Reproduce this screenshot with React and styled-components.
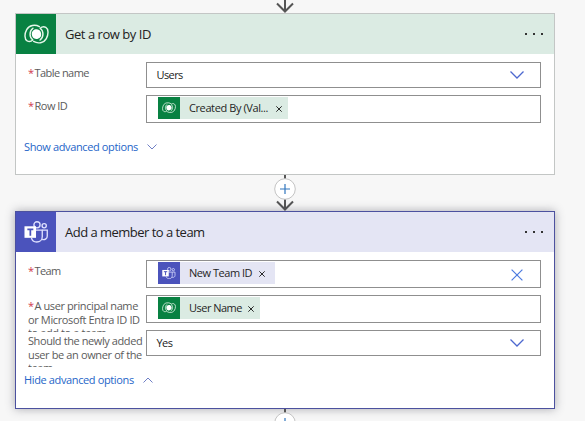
import React from "react";
import styled, { createGlobalStyle } from "styled-components";

const Global = createGlobalStyle`
  *, *::before, *::after { box-sizing: border-box; }
  body { margin: 0; background: #f7f7f7; overflow: hidden; }
`;

const Canvas = styled.main`
  width: 585px;
  height: 421px;
  overflow: hidden;
  display: flex;
  flex-direction: column;
  padding-left: 15px;
  font-family: "Segoe UI", "Open Sans", "Noto Sans", sans-serif;
  font-size: 11px;
  color: #1f1f1f;
`;

const Connector = styled.div`
  flex: none;
  width: 540px;
  height: ${(p) => p.$height}px;
  display: flex;
  justify-content: center;
  svg { display: block; overflow: visible; }
`;

const Card = styled.section`
  flex: none;
  width: 540px;
  height: ${(p) => p.$height}px;
  background: #fff;
  border: 1px solid ${(p) => p.$border};
  box-shadow: ${(p) => (p.$selected ? "0 0 9px rgba(60, 60, 75, 0.42)" : "none")};
`;

const Header = styled.header`
  height: 40px;
  display: flex;
  align-items: center;
  background: ${(p) => p.$tint};
`;

const IconTile = styled.span`
  flex: none;
  width: ${(p) => p.$size}px;
  height: ${(p) => p.$size}px;
  display: flex;
  align-items: center;
  justify-content: center;
  background: ${(p) => p.$color};
`;

const Title = styled.h2`
  flex: 1;
  margin: 0 0 0 9px;
  font-size: 13px;
  line-height: 18px;
  font-weight: 400;
  color: #222;
  letter-spacing: ${(p) => p.$track}px;
`;

const MenuButton = styled.button`
  width: 18px;
  height: 12px;
  margin-right: 11px;
  padding: 0;
  border: 0;
  background: none;
  display: flex;
  align-items: center;
  justify-content: space-between;
`;

const Dot = styled.i`
  width: 2px;
  height: 2px;
  background: #333;
`;

const Fields = styled.div`
  padding: 8px 13px 0 12px;
  display: grid;
  row-gap: 7px;
`;

const Row = styled.div`
  display: grid;
  grid-template-columns: 118px 395px;
  grid-template-rows: 100%;
  height: ${(p) => p.$height}px;
`;

const Label = styled.label`
  height: 33px;
  margin-top: 4px;
  overflow: hidden;
  line-height: 14px;
  color: #5b5b5b;
  white-space: nowrap;
`;

const Line = styled.span`
  display: block;
  letter-spacing: ${(p) => p.$track}px;
  &:nth-child(3) { margin-top: -1px; }
`;

const Required = styled.span`
  display: inline-block;
  width: 6.500px;
  color: #d0384c;
  letter-spacing: 0;
`;

const Field = styled.div`
  display: flex;
  align-items: center;
  padding: 0 16px 0 ${(p) => (p.$tokens ? 11 : 9.5)}px;
  border: 1px solid #8f8f8f;
  background: #fff;
  svg { flex: none; }
`;

const Value = styled.span`
  flex: 1;
  color: #222;
  margin-top: -1px;
  letter-spacing: ${(p) => p.$track}px;
`;

const Token = styled.span`
  width: ${(p) => p.$width}px;
  height: 22px;
  margin: 0 auto 2px 0;
  display: flex;
  align-items: center;
  background: ${(p) => p.$tint};
  white-space: nowrap;
`;

const TokenText = styled.span`
  flex: 1;
  margin: -1px 0 0 9px;
  letter-spacing: ${(p) => p.$track}px;
`;

const TokenClose = styled.button`
  width: 6px;
  height: 6px;
  margin: 1px ${(p) => p.$right}px 0 0;
  padding: 0;
  border: 0;
  background: none;
  display: flex;
`;

const AdvancedLink = styled.button`
  margin: 16px 0 0 8px;
  padding: 0;
  border: 0;
  background: none;
  display: flex;
  align-items: center;
  gap: 9px;
  font: inherit;
  line-height: 16px;
  color: #2565c8;
  letter-spacing: ${(p) => p.$track}px;
`;

const GREEN = "#088142";
const GREEN_TINT = "#dbebe3";
const PURPLE = "#4b53bc";
const PURPLE_TINT = "#e4e5f4";

const LOBE = "M16 2.300C11.500-.3 5.500.6 2.800 5.300.4 9.600.3 15.300 3.300 17c1.900 1 4.300.5 5.900-.9C5.300 13.200 5.300 7 9.300 3.900";

function DataverseIcon({ width }) {
  return (
    <svg width={width} height={(width * 21) / 26} viewBox="0 -.5 26 21" fill="none" stroke="#e5f6e9" strokeWidth="1.5" strokeLinecap="round" strokeLinejoin="round">
      <path d={LOBE} />
      <path d={LOBE} transform="rotate(180 13 10)" />
      <path d="M9.400 6.400c2.500-2.600 6.900-1.700 8 1.300 1 2.500.5 4.800-.8 5.900-2.500 2.600-6.900 1.700-8-1.300-1-2.500-.5-4.800.8-5.900z" fill="#fff" stroke="none" />
    </svg>
  );
}

function TeamsIcon({ width }) {
  return (
    <svg width={width} height={(width * 23) / 26} viewBox="0 0 26 23" fill="none" stroke="#dfe1ff" strokeWidth="1.400">
      <circle cx="13.500" cy="4" r="3.200" />
      <circle cx="21" cy="5" r="2.200" />
      <path d="M12 9.500h7v6.500c0 3.500-2.500 5.800-5.700 5.800-2.800 0-5-1.500-5.600-4.300" />
      <path d="M19 9.500h5.200v6c0 2.700-2.200 4.400-5.400 3.700" />
      <rect x="0.500" y="5.500" width="12" height="12" fill="#fff" stroke="none" />
      <path d="M3.500 8.700h6.200M6.600 8.700v6.600" stroke={PURPLE} strokeWidth="1.800" />
    </svg>
  );
}

const Chevron = ({ width, height, color, up, stroke = 1.3 }) => (
  <svg width={width} height={height} viewBox={`0 0 ${width} ${height}`} fill="none" stroke={color} strokeWidth={stroke}>
    <path d={up ? `M.5 ${height - 0.5}L${width / 2} 1 ${width - 0.5} ${height - 0.5}` : `M.5 .5L${width / 2} ${height - 1} ${width - 0.5} .5`} />
  </svg>
);

const FieldChevron = () => <Chevron width={14} height={8} color="#4d68cf" />;

const Cross = ({ size, color, stroke }) => (
  <svg width={size} height={size} viewBox="0 0 10 10" stroke={color} strokeWidth={stroke}>
    <path d="M.5.5l9 9M9.500.5l-9 9" />
  </svg>
);

const ClearButton = styled.button`
  margin: 1px 1px 0 0;
  padding: 0;
  border: 0;
  background: none;
  display: flex;
`;

function Service({ kind, large }) {
  const green = kind === "dataverse";
  return (
    <IconTile $size={large ? 40 : 22} $color={green ? GREEN : PURPLE}>
      {green ? <DataverseIcon width={large ? 25 : 14} /> : <TeamsIcon width={large ? 25 : 14} />}
    </IconTile>
  );
}

function CardHeader({ kind, title, track }) {
  return (
    <Header $tint={kind === "dataverse" ? GREEN_TINT : PURPLE_TINT}>
      <Service kind={kind} large />
      <Title $track={track}>{title}</Title>
      <MenuButton aria-label="Menu"><Dot /><Dot /><Dot /></MenuButton>
    </Header>
  );
}

function FieldToken({ kind, width, track, closeInset = 6, children }) {
  return (
    <Token $width={width} $tint={kind === "dataverse" ? GREEN_TINT : PURPLE_TINT}>
      <Service kind={kind} />
      <TokenText $track={track}>{children}</TokenText>
      <TokenClose $right={closeInset} aria-label="Remove"><Cross size={6} color="#222" stroke={1.600} /></TokenClose>
    </Token>
  );
}

const AddCircle = ({ cy }) => (
  <g>
    <circle cx="15" cy={cy} r="10.300" fill="#fff" stroke="#c4c4c4" strokeWidth="1" />
    <path d={`M10 ${cy}h10M15 ${cy - 5}v10`} stroke="#3176bd" strokeWidth="1.200" />
  </g>
);

export default function App() {
  return (
    <>
      <Global />
      <Canvas>
        <Connector $height={13}>
          <svg width="30" height="13" fill="none" stroke="#555" strokeWidth="2">
            <path d="M15 0v11M7 3.500l8 8 8-8" />
          </svg>
        </Connector>

        <Card $height={162} $border="#c3c6c5">
          <CardHeader kind="dataverse" title="Get a row by ID" track={-0.46} />
          <Fields>
            <Row $height={26}>
              <Label><Line $track={-0.55}><Required>*</Required>Table name</Line></Label>
              <Field><Value $track={-0.6}>Users</Value><FieldChevron /></Field>
            </Row>
            <Row $height={28}>
              <Label><Line $track={-0.5}><Required>*</Required>Row ID</Line></Label>
              <Field $tokens>
                <FieldToken kind="dataverse" width={130} track={-0.4}>Created By (Val...</FieldToken>
              </Field>
            </Row>
          </Fields>
          <AdvancedLink $track={-0.37}>
            Show advanced options <Chevron width={10} height={6} color="#6f7fc5" stroke={1} />
          </AdvancedLink>
        </Card>

        <Connector $height={36}>
          <svg width="30" height="36" fill="none" stroke="#555" strokeWidth="2">
            <path d="M15 0v34M7 26.500l8 8 8-8" />
            <AddCircle cy={14} />
          </svg>
        </Connector>

        <Card $height={198} $border="#4c519f" $selected>
          <CardHeader kind="teams" title="Add a member to a team" track={-0.52} />
          <Fields>
            <Row $height={28}>
              <Label><Line $track={-0.6}><Required>*</Required>Team</Line></Label>
              <Field $tokens>
                <FieldToken kind="teams" width={117} track={-0.47} closeInset={10}>New Team ID</FieldToken>
                <ClearButton aria-label="Clear"><Cross size={12} color="#4d7be0" stroke={1} /></ClearButton>
              </Field>
            </Row>
            <Row $height={28}>
              <Label>
                <Line $track={-0.4}><Required>*</Required>A user principal name</Line>
                <Line $track={-0.37}>or Microsoft Entra ID ID</Line>
                <Line $track={-0.4}>to add to a team</Line>
              </Label>
              <Field $tokens>
                <FieldToken kind="dataverse" width={102} track={-0.52}>User Name</FieldToken>
              </Field>
            </Row>
            <Row $height={26}>
              <Label>
                <Line $track={-0.41}>Should the newly added</Line>
                <Line $track={-0.37}>user be an owner of the</Line>
                <Line $track={-0.4}>team</Line>
              </Label>
              <Field><Value $track={-0.6}>Yes</Value><FieldChevron /></Field>
            </Row>
          </Fields>
          <AdvancedLink $track={-0.37}>
            Hide advanced options <Chevron width={10} height={6} color="#6f7fc5" stroke={1} up />
          </AdvancedLink>
        </Card>

        <Connector $height={12}>
          <svg width="30" height="12" fill="none" stroke="#555" strokeWidth="2">
            <path d="M15 0v6" />
            <AddCircle cy={14} />
          </svg>
        </Connector>
      </Canvas>
    </>
  );
}
